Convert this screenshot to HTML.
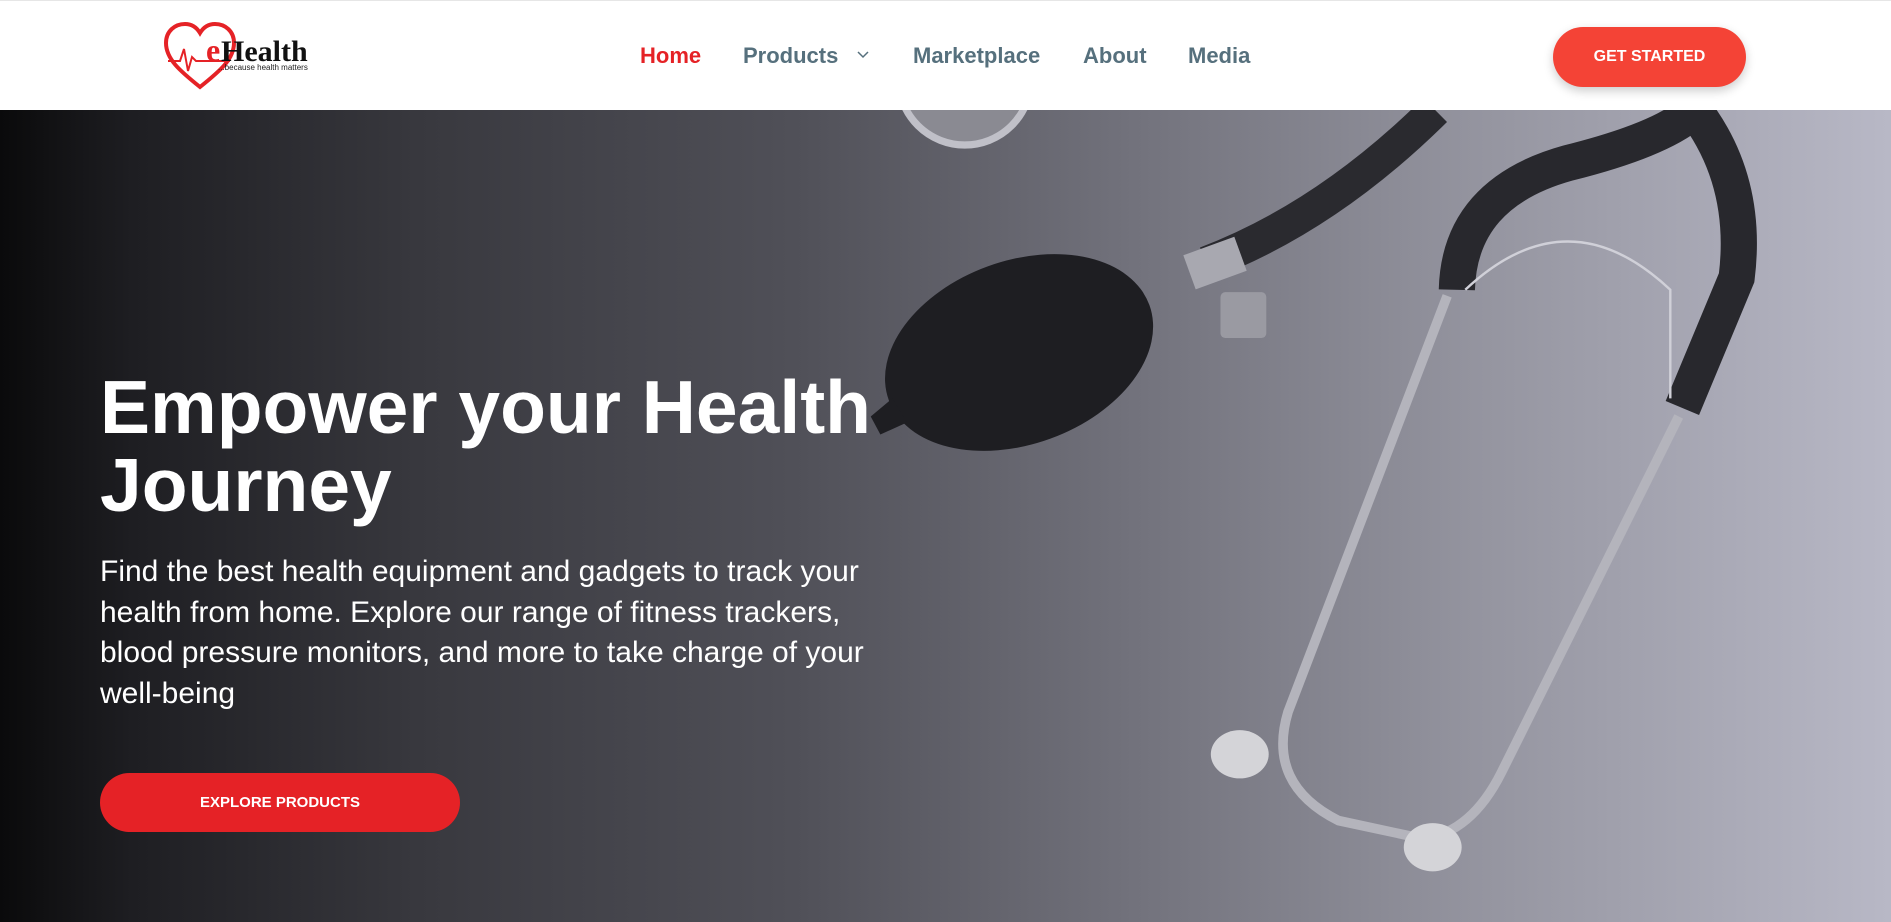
<!DOCTYPE html>
<html><head><meta charset="utf-8"><style>
*{margin:0;padding:0;box-sizing:border-box}
body{width:1891px;height:922px;overflow:hidden;font-family:"Liberation Sans",Arial,sans-serif;background:#fff;position:relative}
.nav{position:absolute;left:0;top:0;width:1891px;height:110px;background:#fff;border-top:1px solid #e6e6e6;z-index:2}
.nav a{position:absolute;top:42px;font-size:22px;font-weight:700;color:#56707d;text-decoration:none;line-height:26px}
.btn1{position:absolute;left:1553px;top:26px;width:193px;height:60px;border-radius:30px;background:#f44336;color:#fff;font-weight:700;font-size:16px;text-align:center;line-height:60px;box-shadow:0 4px 10px rgba(0,0,0,.2)}
.hero{position:absolute;left:0;top:110px;width:1891px;height:812px;background:linear-gradient(90deg,#0a0a0b 0%,#1e1e22 7%,#38383e 22%,#505058 42%,#72727c 60%,#94949f 78%,#b8b8c6 100%)}
h1{position:absolute;left:100px;top:368px;font-size:75px;line-height:78px;font-weight:700;color:#fff;z-index:1}
p{position:absolute;left:100px;top:552px;width:785px;font-size:30px;line-height:40.5px;color:#fff;z-index:1}
.btn2{position:absolute;left:100px;top:773px;width:360px;height:59px;border-radius:30px;background:#e52226;color:#fff;font-weight:700;font-size:15px;text-align:center;line-height:59px;z-index:1}
</style></head><body>
<div class="nav">
<svg style="position:absolute;left:160px;top:18px" width="160" height="76" viewBox="0 0 160 76">
<path d="M40 68 C20 52 6 40 6 24 C6 12 15 5 25 5 C32 5 37 9 40 14 C43 9 48 5 55 5 C65 5 74 12 74 24 C74 40 60 52 40 68Z" fill="none" stroke="#e52226" stroke-width="4"/>
<path d="M8 42 L20 42 L24 30 L28 52 L32 38 L36 42 L70 42" fill="none" stroke="#e52226" stroke-width="2"/>
<text x="46" y="42" font-family="Liberation Serif,serif" font-size="32" font-weight="700" fill="#e52226">e</text>
<text x="61" y="42" font-family="Liberation Serif,serif" font-size="30" font-weight="700" fill="#111">Health</text>
<text x="58" y="51" font-family="Liberation Sans,sans-serif" font-size="8" fill="#222">...because health matters</text>
</svg>
<a style="left:640px;color:#e52226">Home</a>
<a style="left:743px">Products</a>
<svg style="position:absolute;left:857px;top:50px" width="12" height="8" viewBox="0 0 12 8"><path d="M1 1 L6 6 L11 1" fill="none" stroke="#56707d" stroke-width="1.5"/></svg>
<a style="left:913px">Marketplace</a>
<a style="left:1083px">About</a>
<a style="left:1188px">Media</a>
<div class="btn1">GET STARTED</div>
</div>
<div class="hero">
<svg width="1891" height="812" viewBox="0 91 1568 673" preserveAspectRatio="none" style="position:absolute;left:0;top:0">
<circle cx="800" cy="65" r="55" fill="#8a8a92" stroke="#c0c0c8" stroke-width="6"/>
<path d="M1000 218 Q1100 180 1190 91" fill="none" stroke="#2a2a2f" stroke-width="28"/>
<rect x="985" y="203" width="45" height="30" fill="#a8a8b0" transform="rotate(-20 1007 218)"/>
<rect x="1012" y="242" width="38" height="38" rx="4" fill="#9a9aa2"/>
<ellipse cx="845" cy="292" rx="115" ry="76" fill="#1e1e22" transform="rotate(-20 845 292)"/>
<path d="M740 330 L722 345 L730 360 L752 350Z" fill="#1e1e22"/>
<path d="M1208 240 Q1210 160 1300 135 Q1380 115 1405 91" fill="none" stroke="#28282d" stroke-width="30"/>
<path d="M1405 91 Q1450 150 1440 230 L1395 338" fill="none" stroke="#28282d" stroke-width="30"/>
<path d="M1200 245 L1068 590 Q1050 650 1110 680 L1180 695" fill="none" stroke="#b4b4bc" stroke-width="8"/>
<path d="M1392 345 L1245 640 Q1220 690 1180 695" fill="none" stroke="#b4b4bc" stroke-width="8"/>
<path d="M1215 240 Q1300 160 1385 240 L1385 330" fill="none" stroke="#d0d0d8" stroke-width="2"/>
<ellipse cx="1028" cy="625" rx="24" ry="20" fill="#d4d4d8"/>
<ellipse cx="1188" cy="702" rx="24" ry="20" fill="#d4d4d8"/>
</svg>
</div>
<h1>Empower your Health<br>Journey</h1>
<p>Find the best health equipment and gadgets to track your health from home. Explore our range of fitness trackers, blood pressure monitors, and more to take charge of your well-being</p>
<div class="btn2">EXPLORE PRODUCTS</div>
</body></html>
